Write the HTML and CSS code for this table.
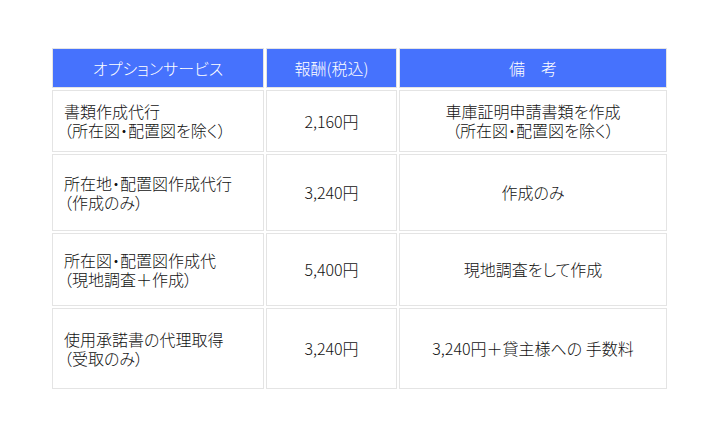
FILE: index.html
```html
<!DOCTYPE html>
<html lang="ja">
<head>
<meta charset="utf-8">
<title>オプションサービス</title>
<link rel="stylesheet" href="styles.css">
</head>
<body>
<div class="wrap">
<table class="price">
  <thead>
    <tr class="head">
      <th class="c1">オプションサービス</th>
      <th class="c2">報酬(税込)</th>
      <th class="c3">備　考</th>
    </tr>
  </thead>
  <tbody>
    <tr class="r1">
      <td class="name">書類作成代行<br>（所在図・配置図を除く）</td>
      <td class="price-cell">2,160円</td>
      <td class="note">車庫証明申請書類を作成<br>（所在図・配置図を除く）</td>
    </tr>
    <tr class="r2">
      <td class="name">所在地・配置図作成代行<br>（作成のみ）</td>
      <td class="price-cell">3,240円</td>
      <td class="note">作成のみ</td>
    </tr>
    <tr class="r3">
      <td class="name">所在図・配置図作成代<br>（現地調査＋作成）</td>
      <td class="price-cell">5,400円</td>
      <td class="note">現地調査をして作成</td>
    </tr>
    <tr class="r4">
      <td class="name">使用承諾書の代理取得<br>（受取のみ）</td>
      <td class="price-cell">3,240円</td>
      <td class="note">3,240円＋貸主様への 手数料</td>
    </tr>
  </tbody>
</table>
</div>
</body>
</html>
```

FILE: styles.css
```css
html, body {
  margin: 0;
  padding: 0;
  background: #ffffff;
}

.wrap {
  padding: 46px 0 0 50px;
}

.price {
  border-collapse: separate;
  border-spacing: 2px;
  table-layout: fixed;
  width: 619px;
  font-family: "Noto Sans CJK JP", "Noto Sans", sans-serif;
  font-feature-settings: "palt";
  font-size: 16px;
  font-weight: 300;
  line-height: 19px;
  color: #111111;
}

.price th,
.price td {
  box-sizing: border-box;
  border: 1px solid #e4e4e4;
  padding: 0;
  vertical-align: middle;
}

.price th {
  background: #4672fd;
  color: #ffffff;
  font-weight: 300;
  text-align: center;
}

.c1 { width: 212px; }
.c2 { width: 131px; }
.c3 { width: 268px; }

.head th { height: 40px; }
.r1 td { height: 62px; }
.r2 td { height: 77px; }
.r3 td { height: 73px; }
.r4 td { height: 81px; }

.price td.name {
  text-align: left;
  padding-left: 11px;
}

.price td.price-cell,
.price td.note {
  text-align: center;
}
```
